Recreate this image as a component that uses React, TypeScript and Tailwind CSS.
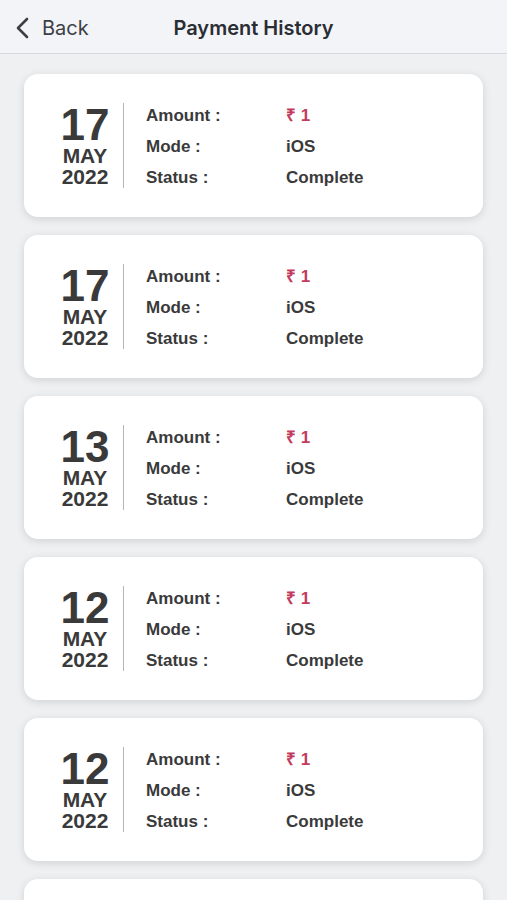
import React from "react";

const items = [
  { d: "17", m: "MAY", y: "2022" },
  { d: "17", m: "MAY", y: "2022" },
  { d: "13", m: "MAY", y: "2022" },
  { d: "12", m: "MAY", y: "2022" },
  { d: "12", m: "MAY", y: "2022" },
];

function Card({ d, m, y }: { d: string; m: string; y: string }) {
  return (
    <div className="flex h-[143px] shrink-0 items-center rounded-[14px] bg-white pl-[26px] shadow-[0_2px_8px_rgba(0,0,0,0.13)]">
      <div className="flex w-[70px] flex-col items-center pt-[1px] text-[#3a3a3a]">
        <div className="text-[44px] font-bold leading-[40px]">{d}</div>
        <div className="text-[21px] font-bold leading-[21px]">{m}</div>
        <div className="text-[21px] font-bold leading-[21px]">{y}</div>
      </div>
      <div className="ml-[3px] h-[85px] w-px bg-[#b5b5b5]" />
      <div className="ml-[22px] grid grid-cols-[140px_1fr] gap-y-[11px] pt-[2px] text-[17px] font-bold leading-[20px] text-[#3a3a3a]">
        <div>Amount :</div>
        <div className="text-[#c23a5c]">₹ 1</div>
        <div>Mode :</div>
        <div>iOS</div>
        <div>Status :</div>
        <div>Complete</div>
      </div>
    </div>
  );
}

export default function App() {
  return (
    <div
      className="flex h-[900px] w-[507px] flex-col overflow-hidden bg-[#eff0f2]"
      style={{ fontFamily: '"Liberation Sans", Arial, sans-serif' }}
    >
      <div className="relative flex h-[54px] shrink-0 items-center border-b border-[#d8d9db] bg-[#f3f4f7]">
        <div className="flex items-center pl-[14px] pt-[2px] text-[#3c3f44]">
          <svg width="18" height="24" viewBox="0 0 18 24" fill="none">
            <path d="M13 3 L4 12 L13 21" stroke="#3c3f44" strokeWidth="2.6" strokeLinecap="round" strokeLinejoin="round" />
          </svg>
          <span className="ml-[10px] text-[20px] leading-none" style={{ fontFamily: "Inter, sans-serif" }}>Back</span>
        </div>
        <div
          className="absolute left-0 right-0 pt-[2px] text-center text-[20px] font-semibold text-[#2a2d33]"
          style={{ fontFamily: "Inter, sans-serif" }}
        >
          Payment History
        </div>
      </div>
      <div className="flex flex-col gap-[18px] px-[24px] pt-[20px]">
        {items.map((it, i) => (
          <Card key={i} {...it} />
        ))}
        <div className="h-[143px] shrink-0 rounded-[14px] bg-white shadow-[0_2px_8px_rgba(0,0,0,0.13)]" />
      </div>
    </div>
  );
}
